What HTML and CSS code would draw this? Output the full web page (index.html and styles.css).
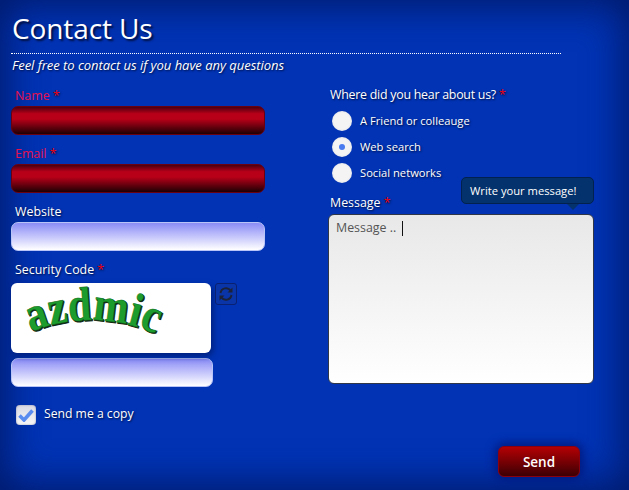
FILE: index.html
```html
<!DOCTYPE html>
<html lang="en">
<head>
<meta charset="utf-8">
<title>Contact Us</title>
<link rel="stylesheet" href="styles.css">
</head>
<body>
<div class="page">
  <header class="head">
    <h1 class="title">Contact Us</h1>
    <p class="sub">Feel free to contact us if you have any questions</p>
  </header>
  <form class="columns">
    <div class="col-left">
      <div class="field">
        <label class="lbl lbl-err">Name <span class="req">*</span></label>
        <div class="input input-err"></div>
      </div>
      <div class="field">
        <label class="lbl lbl-err">Email <span class="req">*</span></label>
        <div class="input input-err"></div>
      </div>
      <div class="field">
        <label class="lbl">Website</label>
        <div class="input"></div>
      </div>
      <div class="field">
        <label class="lbl">Security Code <span class="req">*</span></label>
        <div class="captcha-row">
          <div class="captcha">
            <svg width="200" height="70" viewBox="0 0 200 70">
              <defs><path id="arc" d="M20 49 C 50 36, 100 28, 156 56 L 190 74"/></defs>
              <text class="cap-shadow" font-size="48"><textPath href="#arc" textLength="128" lengthAdjust="spacingAndGlyphs">azdmic</textPath></text>
              <text class="cap-text" font-size="48"><textPath href="#arc" textLength="128" lengthAdjust="spacingAndGlyphs">azdmic</textPath></text>
            </svg>
          </div>
          <div class="refresh">
            <svg width="16" height="16" viewBox="0 0 16 16" fill="none" stroke="#1c2238" stroke-width="1.9">
              <path d="M2.5 7 A5.6 5.6 0 0 1 12.6 4.6"/>
              <path d="M13.5 9 A5.6 5.6 0 0 1 3.4 11.4"/>
              <path d="M14.5 1.5 L14.5 6.5 L9.5 6.5 Z" fill="#1c2238" stroke="none"/>
              <path d="M1.5 14.5 L1.5 9.5 L6.5 9.5 Z" fill="#1c2238" stroke="none"/>
            </svg>
          </div>
        </div>
        <div class="input input-code"></div>
      </div>
      <div class="copy">
        <span class="check">
          <svg width="16" height="14" viewBox="0 0 16 14"><path d="M1.5 7.5 L6 12 L14.5 2.5" fill="none" stroke="#5a8cf0" stroke-width="3.6"/></svg>
        </span>
        <span class="copy-text">Send me a copy</span>
      </div>
    </div>
    <div class="col-right">
      <label class="lbl lbl-q lbl-where">Where did you hear about us? <span class="req">*</span></label>
      <div class="radio-row"><span class="radio"></span><span class="radio-text">A Friend or colleauge</span></div>
      <div class="radio-row"><span class="radio radio-on"></span><span class="radio-text">Web search</span></div>
      <div class="radio-row"><span class="radio"></span><span class="radio-text">Social networks</span></div>
      <div class="message">
        <label class="lbl lbl-q">Message <span class="req">*</span></label>
        <div class="tip">Write your message!</div>
        <div class="textarea"><span class="ph">Message ..</span><span class="caret"></span></div>
      </div>
    </div>
  </form>
  <div class="actions"><button type="button" class="send">Send</button></div>
</div>
</body>
</html>
```
FILE: styles.css
```css
* { box-sizing: border-box; }
html, body { margin: 0; height: 100%; }
body {
  width: 629px;
  height: 490px;
  overflow: hidden;
  background: #0133b4;
  font-family: "Open Sans", "Liberation Sans", sans-serif;
  color: #fff;
}
.page {
  width: 629px;
  height: 490px;
  padding: 0 35px 0 11px;
  box-shadow: inset 0 0 38px 6px #001a6a;
}
.head { height: 85px; }
.title {
  margin: 0;
  padding: 10px 0 0 1px;
  width: 550px;
  height: 54px;
  border-bottom: 1px dotted #fff;
  font-size: 28px;
  line-height: 36px;
  font-weight: 400;
  letter-spacing: -0.1px;
  text-shadow: 2px 2px 2px #001040;
}
.sub {
  margin: 2px 0 0 1px;
  font-size: 13px;
  line-height: 18px;
  font-style: italic;
  letter-spacing: -0.03px;
  text-shadow: 1px 1px 2px #001040;
}
.columns {
  display: grid;
  grid-template-columns: 254px 266px;
  column-gap: 63px;
}
.field { margin-bottom: 8px; }
.lbl {
  display: block;
  padding-left: 4px;
  height: 21px;
  font-size: 12.4px;
  line-height: 22px;
  text-shadow: 1px 1px 2px #001040;
}
.lbl-err { color: #e8104e; text-shadow: none; }
.req { color: #f00010; text-shadow: 1px 1px 2px #001040; }
.input {
  height: 29px;
  border: 1px solid #b8c4f8;
  border-radius: 7px;
  background: linear-gradient(#8a8cf6, #fff);
}
.input-err {
  border-color: #6a0010;
  background: linear-gradient(#4a0010, #b80018 25%, #b80018 45%, #1e0004);
}
.input-code { width: 202px; margin-top: 5px; }
.captcha-row { display: flex; gap: 4px; align-items: flex-start; padding-top: 3px; }
.captcha {
  width: 200px;
  height: 70px;
  background: #fff;
  border-radius: 6px;
  box-shadow: 2px 3px 6px #00207a;
}
.captcha svg { display: block; }
.cap-text { font-family: "Liberation Serif", serif; fill: #1d9c2e; stroke: #107020; stroke-width: 0.5; font-weight: 700; }
.cap-shadow { font-family: "Liberation Serif", serif; fill: #102810; stroke: #102810; stroke-width: 1; font-weight: 700; transform: translate(1px, 1px); }
.refresh {
  width: 22px;
  height: 22px;
  border: 1px solid #0a2070;
  border-radius: 3px;
  display: flex;
  align-items: center;
  justify-content: center;
  background: #0a35a8;
}
.copy { display: flex; align-items: center; gap: 8px; padding: 10px 0 0 5px; }
.check {
  width: 20px;
  height: 20px;
  border-radius: 4px;
  background: linear-gradient(#d8d8e4, #f8f8f8);
  box-shadow: inset 0 0 2px #8088a8;
  display: flex;
  align-items: center;
  justify-content: center;
}
.copy-text { font-size: 12.2px; line-height: 18px; margin-top: -2px; text-shadow: 1px 1px 2px #001040; }
.lbl-q { padding-left: 2px; }
.lbl-where { height: 23px; line-height: 20px; letter-spacing: -0.25px; }
.radio-row { display: flex; align-items: center; height: 26px; padding-left: 4px; }
.radio {
  width: 20px;
  height: 20px;
  border-radius: 50%;
  background: radial-gradient(circle, #f4f4f4 55%, #d4d4e0);
  margin-right: 8px;
  display: flex;
  align-items: center;
  justify-content: center;
}
.radio-on::after {
  content: "";
  width: 6px;
  height: 6px;
  border-radius: 50%;
  background: #4a7cf0;
}
.radio-text { font-size: 11.2px; line-height: 24px; text-shadow: 1px 1px 2px #001040; }
.message { position: relative; margin-top: 6px; }
.message .lbl { height: 22px; }
.tip {
  position: absolute;
  right: 0;
  top: -15px;
  width: 133px;
  height: 27px;
  padding-left: 8px;
  background: #04326c;
  border: 1px solid #02214e;
  border-radius: 5px;
  font-size: 11.2px;
  line-height: 25px;
}
.tip::after {
  content: "";
  position: absolute;
  right: 14px;
  bottom: -7px;
  border-left: 6px solid transparent;
  border-right: 6px solid transparent;
  border-top: 6px solid #04326c;
}
.textarea {
  height: 170px;
  padding: 4px 7px;
  background: linear-gradient(#e8e8e8, #ffffff);
  border: 1px solid #303848;
  border-radius: 6px;
  display: flex;
  align-items: flex-start;
}
.ph { color: #555; font-size: 12.4px; line-height: 18px; }
.caret { width: 1px; height: 15px; margin: 2px 0 0 6px; background: #111; }
.actions { position: absolute; left: 498px; top: 446px; }
.send {
  display: block;
  width: 82px;
  height: 31px;
  border: 1px solid #8a0010;
  border-radius: 6px;
  background: linear-gradient(#b40004, #3c0004);
  box-shadow: 0 0 10px 3px #001a80;
  color: #fff;
  font-family: "Open Sans", "Liberation Sans", sans-serif;
  font-size: 13.5px;
  font-weight: 600;
  padding: 0;
}
```
